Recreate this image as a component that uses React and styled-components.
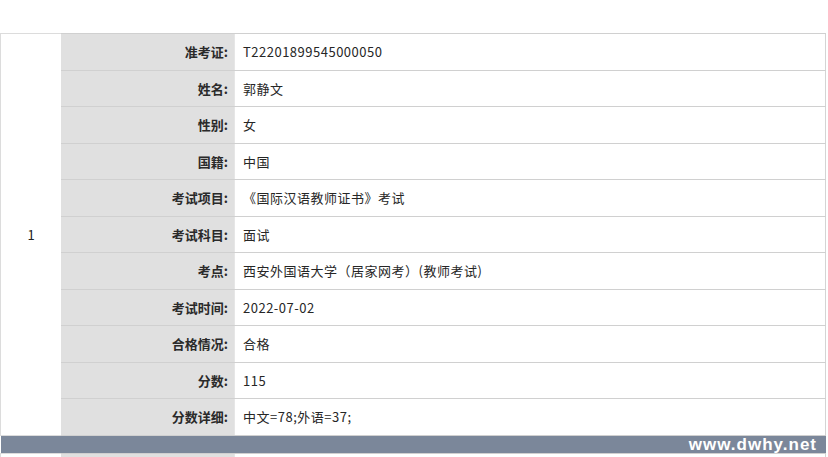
import React from 'react'
import styled, { createGlobalStyle } from 'styled-components'

const GlobalStyle = createGlobalStyle`
  html, body {
    margin: 0;
    padding: 0;
    background: #fff;
  }
  body {
    font-family: "Noto Sans CJK SC", "Noto Sans", "Liberation Sans", sans-serif;
    color: #222;
  }
`;

const Page = styled.div`
  width: 828px;
  height: 457px;
  overflow: hidden;
  padding-top: 33px;
  box-sizing: border-box;
`;

const StyledTable = styled.table`
  width: 826px;
  border-collapse: collapse;
  table-layout: fixed;
  border-right: 1px solid #d4d4d4;
`;

const StyledTdIndex = styled.td`
  width: 60px;
  text-align: center;
  vertical-align: middle;
  font-size: 13px;
  border: 1px solid #dcdcdc;
  border-right: none;
  padding: 0;
`;

const StyledTh = styled.td`
  width: 167px;
  background: #e0e0e0;
  text-align: right;
  vertical-align: middle;
  font-size: 13px;
  font-weight: 600;
  color: #2a2a2a;
  padding: 0 6px 0 0;
  border-top: 1px solid #d0d0d0;
  border-bottom: 1px solid #d0d0d0;
`;

const StyledTd = styled.td`
  background: #fff;
  text-align: left;
  vertical-align: middle;
  font-size: 13px;
  letter-spacing: 0.5px;
  color: #262626;
  padding: 0 0 0 8px;
  border-top: 1px solid #d0d0d0;
  border-bottom: 1px solid #d0d0d0;
  border-left: 1px solid #e6e6e6;
`;

const StyledTr = styled.tr`
  height: ${({ $h }) => $h || 36.5}px;
`;

const StyledBar = styled.div`
  width: 825px;
  margin-left: 1px;
  height: 17px;
  background: #7b879a;
  display: flex;
  justify-content: flex-end;
  align-items: center;
`;

const StyledMark = styled.span`
  color: #fff;
  font-family: "Liberation Sans", Arial, sans-serif;
  font-weight: bold;
  font-size: 17px;
  letter-spacing: 1px;
  padding-right: 9px;
  line-height: 17px;
`;

const rows = [
  ['准考证:', 'T22201899545000050'],
  ['姓名:', '郭静文'],
  ['性别:', '女'],
  ['国籍:', '中国'],
  ['考试项目:', '《国际汉语教师证书》考试'],
  ['考试科目:', '面试'],
  ['考点:', '西安外国语大学（居家网考）(教师考试)'],
  ['考试时间:', '2022-07-02'],
  ['合格情况:', '合格'],
  ['分数:', '115'],
  ['分数详细:', '中文=78;外语=37;'],
];

const App = () => {
  return (
    <Page>
      <GlobalStyle />
      <StyledTable>
        <tbody>
          {rows.map(([label, value], i) => (
            <StyledTr key={label}>
              {i === 0 && <StyledTdIndex rowSpan={rows.length}>1</StyledTdIndex>}
              <StyledTh>{label}</StyledTh>
              <StyledTd>{value}</StyledTd>
            </StyledTr>
          ))}
        </tbody>
      </StyledTable>
      <StyledBar>
        <StyledMark>www.dwhy.net</StyledMark>
      </StyledBar>
      <StyledTable>
        <tbody>
          <StyledTr $h={30}>
            <StyledTdIndex />
            <StyledTh />
            <StyledTd />
          </StyledTr>
        </tbody>
      </StyledTable>
    </Page>
  );
}

export default App;
